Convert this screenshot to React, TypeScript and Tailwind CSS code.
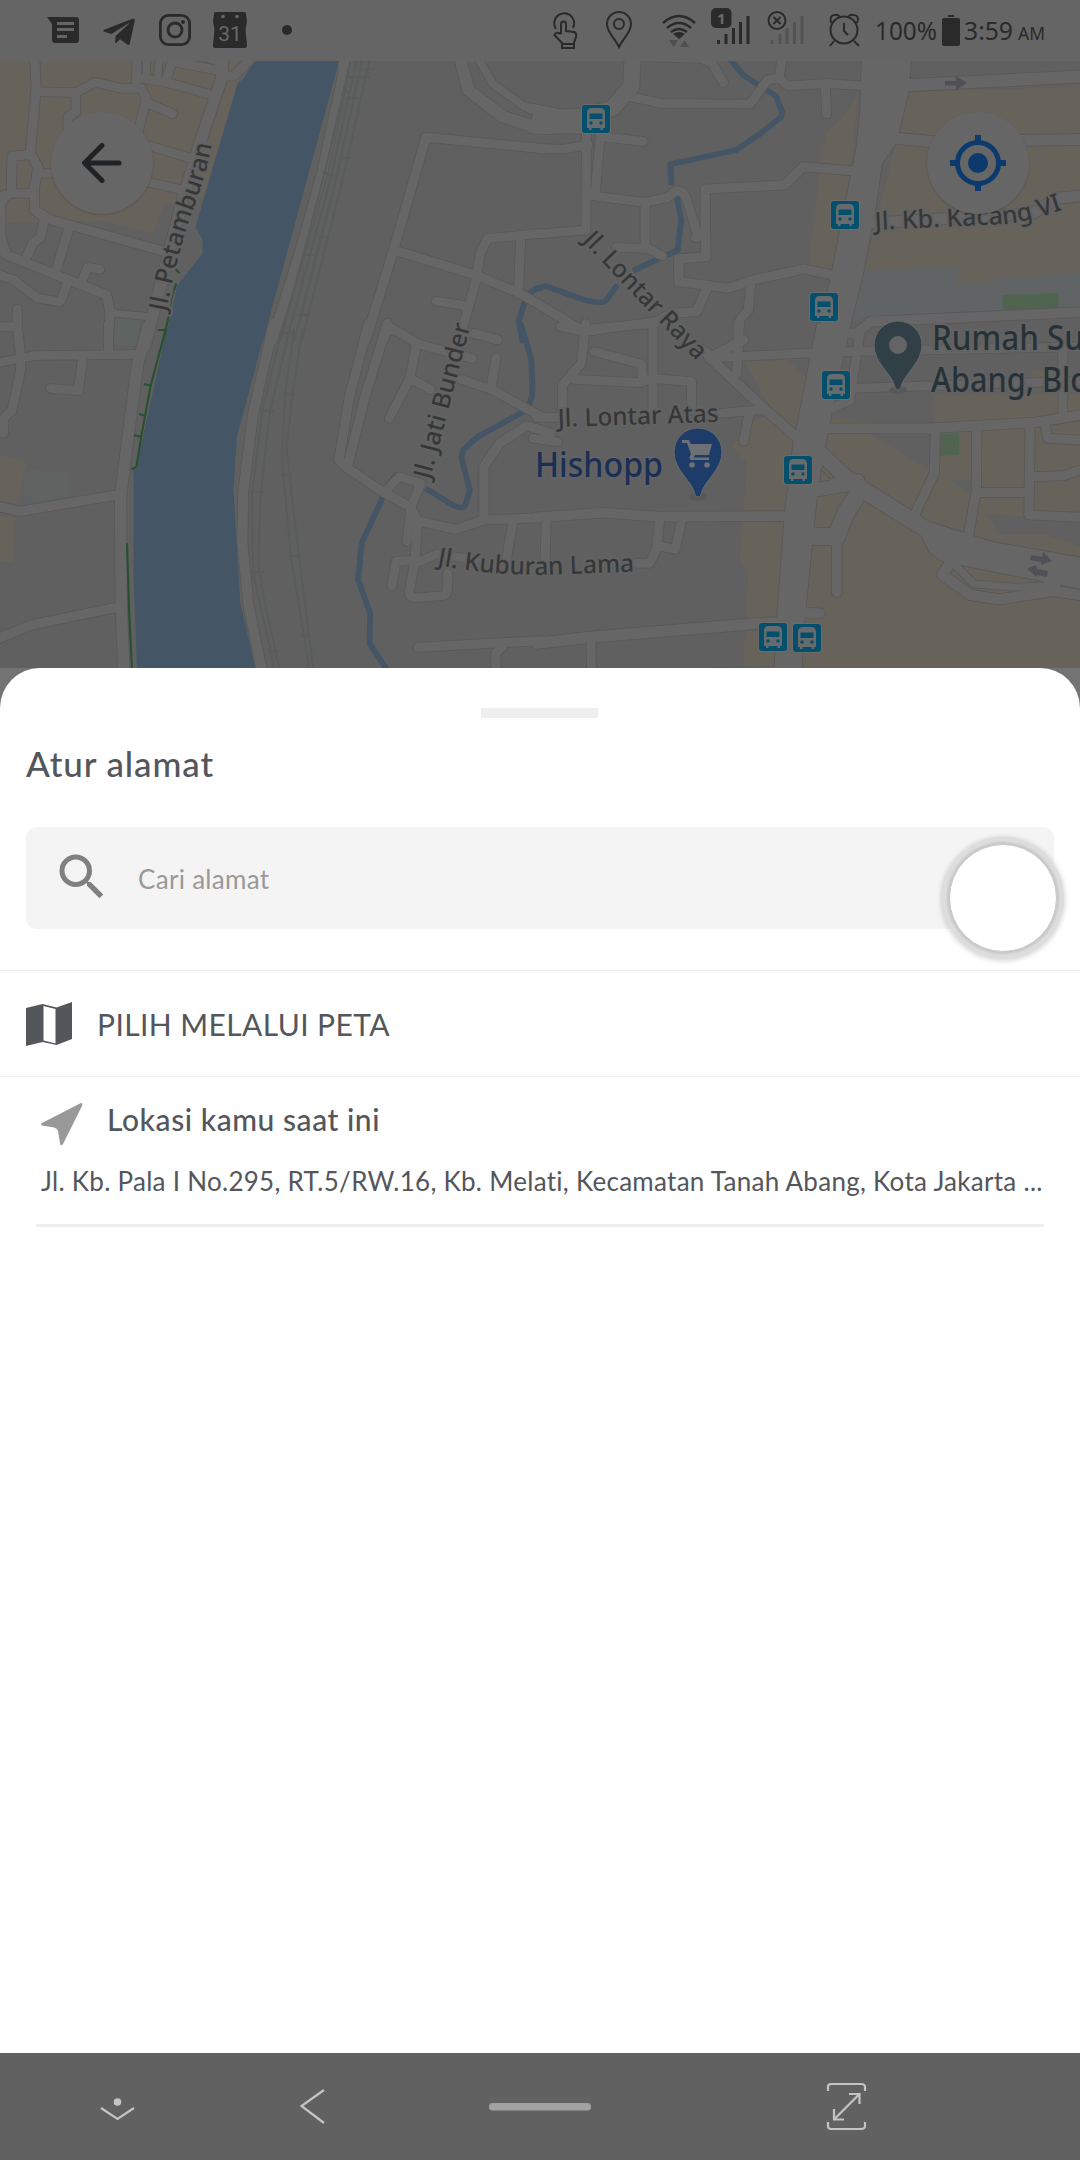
import React from "react";
import { MdSearch } from "react-icons/md";
import { FaTelegramPlane } from "react-icons/fa";

type Road = [sheet: number, width: number, path: string];

// The map is drawn as four sheets that share one coordinate scale.
const SHEETS = [
  "scale(.34439 .33333)",
  "translate(540 0) scale(.34439 .33333)",
  "translate(0 330) scale(.34439 .33333)",
  "translate(540 330) scale(.34439 .33333)",
];

const ROADS: Road[] = [
  [0, 28, "M100 150L105 265L88 460L112 505L100 560V630L130 655"],
  [0, 28, "M88 464L35 468L33 580L0 590M33 580H100M33 580Q4 590 2 620V700Q4 730 20 760"],
  [0, 26, "M105 520H150"],
  [0, 27, "M105 275L220 278L275 247L350 265H410L422 290L425 308L502 341M220 278V336L197 352V390"],
  [0, 27, "M399 150L395 250M395 232L440 240L480 246L610 283M480 246L500 185L640 212M424 300L400 400"],
  [0, 22, "M428 150L423 235M465 150L457 235M500 185L510 150"],
  [0, 28, "M575 160L650 190M640 228L678 228L730 175"],
  [0, 34, "M645 150V230L580 430L530 600L490 760L420 1040"],
  [0, 27, "M430 436L565 478M425 545L530 570"],
  [0, 28, "M100 630L150 660L490 758M127 665L118 712L95 730L80 765M200 685L165 805"],
  [0, 28, "M0 745L20 765L200 840L310 885L320 940L314 1020"],
  [0, 27, "M200 840L175 905L110 895L40 840L0 825M235 850L255 802L290 808M50 927V980H0M50 980L55 1020"],
  [0, 22, "M320 938L430 950"],
  [0, 30, "M1002 150L995 230L935 520L870 760L790 1020"],
  [0, 36, "M1330 150L1360 270L1460 350L1568 385L1600 385"],
  [0, 24, "M1375 150L1430 250L1520 318L1568 330"],
  [0, 28, "M1600 447L1568 445L1237 412L1140 760L1062 1020"],
  [0, 28, "M1150 752L1380 825L1510 880L1568 915"],
  [0, 27, "M1382 840L1395 760L1415 716L1568 700M1512 715L1505 880M1382 840L1345 980M1267 903L1355 918"],
  [0, 26, "M1115 1020Q1120 985 1150 992L1215 1030M1370 1000L1445 1018"],
  [2, 34, "M430 -10L400 100L368 350L350 500L352 830L360 1030"],
  [2, 27, "M0 97L100 77L240 75L410 73M50 -10L60 77V120L35 240L10 265V310M315 -20V70M240 80L228 182L147 175"],
  [2, 29, "M-10 528L58 544L350 493M-10 928L90 885L350 830"],
  [2, 30, "M795 -20L735 250L706 490L704 640L722 830L762 1030"],
  [2, 28, "M1070 -20L1015 200L984 390L1010 415L1110 485L1190 530L1212 570M1125 -20L1060 200L1010 405"],
  [2, 27, "M1130 -10L1210 40L1372 86M1380 10L1445 30M1210 40L1190 145L1130 265M1190 145L1250 178M1340 148L1430 180L1568 258M1440 84L1425 180"],
  [2, 28, "M1600 310L1530 287L1450 340L1405 410V560"],
  [2, 26, "M1190 540L1222 460L1160 440L1118 485M1192 540L1182 635"],
  [2, 28, "M1200 570L1325 598L1405 570L1570 563"],
  [2, 27, "M1212 580L1205 690L1188 790Q1190 804 1210 804L1285 797Q1300 795 1300 770V730M1205 690L1150 694L1138 767M1205 700L1270 672L1380 690M1490 570L1470 690"],
  [2, 28, "M1215 952L1570 932M1440 1030V970L1460 948"],
  [1, 48, "M270 150L265 260L210 325L110 355H0"],
  [1, 30, "M-30 325L60 342L130 340"],
  [1, 46, "M-20 378H130"],
  [1, 27, "M262 290L350 310L610 312L660 240L695 235L705 150M695 235L720 258L830 250L940 258M828 250L832 342"],
  [1, 27, "M270 170L470 175L500 190L533 248"],
  [1, 27, "M135 390L133 690L0 702M176 395L160 580M176 410L300 424M0 447L70 447L140 435"],
  [1, 27, "M133 585L305 607L370 593L395 572Q415 570 425 595L458 705M305 607V740L355 768M222 742L305 745"],
  [1, 28, "M920 514L765 500L710 555L480 567V700L482 770L403 776V845L480 855L545 865L620 840L765 807L860 827"],
  [1, 28, "M482 700L452 712M485 865L455 935L380 940L330 970L120 990L0 915"],
  [1, 27, "M612 850L605 930L580 960L572 1120"],
  [1, 37, "M1060 256L1600 228"],
  [1, 34, "M1020 413L1140 425L1600 418"],
  [1, 34, "M950 670L1430 640L1500 595L1600 585"],
  [1, 30, "M890 1000H920L960 965L1600 935"],
  [3, 27, "M132 -20L120 100L65 165V260M328 -20V240M60 -10L130 5L330 -25"],
  [3, 27, "M158 65L295 102L297 145M100 148L290 158L325 145L440 155V240"],
  [3, 27, "M-20 325L50 335M-10 262H60"],
  [3, 30, "M490 80L650 235L760 335M470 60L500 80L590 30"],
  [3, 27, "M510 83L800 68M575 -20V40M525 250L655 238M608 245L591 335"],
  [3, 30, "M-10 562L185 548L340 560L720 558"],
  [3, 27, "M18 565L15 690M348 565L338 660L318 700H280M412 565L393 658L345 648"],
  [3, 34, "M-10 940L160 920L640 880L700 878"],
  [3, 27, "M148 930L150 1040M500 1027L700 1024"],
  [3, 27, "M880 65L1600 50M900 175L1600 152M930 0L900 210L850 235M1518 60V250"],
  [3, 30, "M820 295H1130L1440 277L1600 250"],
  [3, 28, "M1148 300L1145 430L1085 560M1268 300L1267 480L1243 625M1268 487L1420 488M1423 290L1420 555L1600 563M1435 440L1520 437L1568 420H1600M1465 275L1475 325L1600 332"],
  [3, 30, "M862 630V787M765 848L813 850"],
  [3, 52, "M918 500L890 545L860 620L790 619"],
  [3, 48, "M780 480L920 455"],
  [3, 32, "M1200 685L1168 735L1250 795L1335 808L1490 783L1600 800"],
  [3, 22, "M1200 700L1260 762L1380 772L1500 765"],
];

// Wide avenues whose width changes along their course.
const AVENUES: [number, string][] = [
  [1, "M935 150L930 330L918 450L900 540L845 830L800 1040H888L905 960L940 812L975 620L993 490L1035 430L1070 275L1080 150Z"],
  [3, "M805 -20L735 345L710 560L688 870L680 1040H758L770 850L795 590L805 495L835 310L900 -20Z"],
  [3, "M815 340L910 432L1130 575L1310 635L1600 688V782L1220 705L1165 692L1130 665L1108 618L955 520L905 490L785 370Z"],
];

const STREAMS: [number, string][] = [
  [0, "M1575 863Q1540 868 1527 895L1506 965L1518 1030"],
  [2, "M1512 -20L1543 90L1546 180Q1546 220 1520 245L1385 322L1345 360L1340 385L1364 480L1352 525Q1345 538 1320 528L1235 475"],
  [2, "M1155 430L1115 480L1108 510L1050 640L1040 750L1075 850L1073 940L1130 1030"],
  [1, "M545 170L590 225L650 265L685 288L703 335L700 352L640 400L570 450L378 493L382 555"],
  [1, "M397 590L410 660L400 750L270 812M225 855L190 903Q175 912 130 900L15 858L-20 868"],
];

const BUILT: [number, string][] = [
  [0, "M0 150H740L690 250L590 590L475 615L445 702L300 662L0 668Z"],
  [1, "M1070 275L1600 260V830H1320L1315 850H1210V797L940 812Z"],
  [1, "M925 275L905 490L850 810L780 795L810 520L830 400L880 350Z"],
  [2, "M0 373L78 398L50 520L0 515ZM0 560H46L38 697L0 692Z"],
  [3, "M595 95L720 90L780 150L745 345L690 870L685 1040H588L605 722L580 690L600 400L558 350L620 270L680 255Z"],
  [3, "M835 260L930 275L1145 280V195L1600 190V1040H750L800 440Z"],
  [3, "M1430 120H1490V145H1430Z"],
];

const BUSES = [
  [596, 119], [845, 215], [824, 307], [836, 385], [798, 470], [773, 637], [807, 638],
];

function Bus({ x, y }: { x: number; y: number }) {
  return (
    <g transform={`translate(${x - 14} ${y - 14})`}>
      <rect x="-1" y="-1" width="30" height="30" rx="4" fill="#6b6b6b" />
      <rect width="28" height="28" rx="3" fill="#04506c" />
      <path d="M5 8Q5 3 10 3H18Q23 3 23 8V23H21V25H18.500V23H9.500V25H7V23H5Z" fill="#676b6d" />
      <path d="M7.500 8.500H20.500V14H7.500Z" fill="#04506c" />
      <circle cx="9" cy="18" r="1.700" fill="#04506c" />
      <circle cx="19" cy="18" r="1.700" fill="#04506c" />
    </g>
  );
}

function Pin({ x, y, color }: { x: number; y: number; color: string }) {
  return (
    <g transform={`translate(${x} ${y})`}>
      <ellipse cy="45" rx="9" ry="4" fill="#585858" />
      <path
        d="M0 45Q-3 45-3.500 41C-6 29-24 18-24 0A24 24 0 0 1 24 0C24 18 6 29 3.500 41Q3 45 0 45Z"
        fill={color}
        stroke="#6a6a6a"
        strokeWidth="1"
      />
    </g>
  );
}

function CityMap() {
  return (
    <svg className="absolute inset-0" width="1080" height="607" viewBox="0 61 1080 607">
      <rect y="60" width="1080" height="608" fill="#606060" />
      {BUILT.map(([s, d], i) => (
        <path key={i} d={d} transform={SHEETS[s]} fill="#67635a" />
      ))}
      <g transform={SHEETS[1]}>
        <path d="M940 812L1210 797V850H1315L1320 830L1600 820V925L960 950L905 965Z" fill="#606464" />
        <path d="M1342 885L1505 880V925L1345 932Z" fill="#506450" />
      </g>
      <g transform={SHEETS[3]}>
        <path d="M955 312H1133V420ZM1290 552L1600 570V660L1470 615H1325Q1325 580 1290 552ZM840 195H1145V280L930 275L835 260Z" fill="#606060" />
        <path d="M1185 448L1250 450V490Z" fill="#5f6161" />
        <path d="M1163 312L1217 310V375L1163 377Z" fill="#506450" />
      </g>
      <path d="M28 469L69 473V496L28 503ZM116 312L140 320L136 346H113Z" fill="#5f6463" />
      <g fill="#445665">
        <path transform={SHEETS[0]} d="M760 150L708 235L690 250L568 680L588 720V762L515 855L478 1022H764L985 183V150Z" />
        <path transform={SHEETS[2]} d="M484 -5H773L688 320L678 480L698 820L745 1030H398L388 740V420L398 400Z" />
      </g>
      <g fill="none" strokeLinejoin="round" strokeLinecap="round">
        {STREAMS.map(([s, d], i) => (
          <path key={i} d={d} transform={SHEETS[s]} stroke="#445665" strokeWidth="17" strokeLinecap="butt" />
        ))}
        {ROADS.map(([s, w, d], i) => (
          <path key={i} d={d} transform={SHEETS[s]} stroke="#585858" strokeWidth={w + 4} />
        ))}
        {AVENUES.map(([s, d], i) => (
          <path key={i} d={d} transform={SHEETS[s]} stroke="#585858" strokeWidth="5" />
        ))}
        {ROADS.map(([s, w, d], i) => (
          <path key={i} d={d} transform={SHEETS[s]} stroke="#666" strokeWidth={w - 1} />
        ))}
        {AVENUES.map(([s, d], i) => (
          <path key={i} d={d} transform={SHEETS[s]} fill="#666" />
        ))}
      </g>
      <path d="M820 482L821 469L831 480Z" fill="#67635a" stroke="#585858" />

      {/* railway */}
      <g fill="none" stroke="#595c5c" strokeWidth="6">
        <g transform={SHEETS[0]}>
          <path d="M1025 150L945 510L815 1022M1042 150L962 530L832 1022M1058 150L975 540L855 1022M1080 150L990 560L876 1022" />
          <path d="M1055 208H1085M1005 232H1075M995 275H1015M1005 295H1040M985 475H1018M935 515L972 530M925 710H958M880 765H912M865 945H898M815 998H850" />
        </g>
        <g transform={SHEETS[2]}>
          <path d="M820 -5L762 240L732 490L735 727L750 800L800 1030M842 -5L785 240L757 490L750 700L765 800L815 1030M855 -5L828 190L820 350L822 430L845 680L900 1030M878 -5L850 190L832 350L840 430L868 680L912 1030" />
          <path d="M820 8H850M825 193H855M755 243H795M815 435H846M725 485H765M840 677H873M730 727H767M872 917H902M778 964H810" />
        </g>
      </g>
      {/* river embankment */}
      <g fill="none" stroke="#27502f" strokeWidth="6">
        <path transform={SHEETS[0]} d="M510 808L522 820M512 850L505 872M490 948L474 1022M458 990H480" />
        <path transform={SHEETS[0]} d="M505 872L488 948" strokeWidth="3" />
        <path transform={SHEETS[2]} d="M482 -5L438 165L410 320L396 410L382 418M418 162L440 168M404 252L424 258M389 316L410 320M369 640L375 850L384 1030" />
      </g>

      <g fill="#505057">
        <path d="M945 81H956V76L967 83L956 90V85.500H945Z" />
        <path d="M1031 555L1042 557L1043 552L1052 561L1041 565V562L1030 560ZM1048 571L1037 569L1036 565L1027 569L1037 577V575L1047 577Z" />
      </g>
      {BUSES.map(([x, y]) => (
        <Bus key={`${x}-${y}`} x={x} y={y} />
      ))}
      <Pin x={898} y={345} color="#314046" />
      <circle cx="898" cy="345" r="9" fill="#646464" />
      <Pin x={698} y={452} color="#1d3c69" />
      <g transform="translate(698 452)">
        <path d="M-16-12H-9L-7.500-8H14L11 3H-3L-4.500 5.500H11V8H-7Q-10 7-7 2L-11-9H-16Z" fill="#6d7075" />
        <circle cx="-6" cy="13" r="2.800" fill="#6d7075" />
        <circle cx="9" cy="13" r="2.800" fill="#6d7075" />
      </g>

      <defs>
        <path id="petamburan" d="M166 312Q178 250 194 207T214 130" />
        <path id="jati" d="M430 480L451 400L477 300" />
        <path id="raya" d="M582 241L640 302L710 375" />
        <path id="kacang" d="M875 230L1005 224Q1030 222 1070 207" />
        <path id="kuburan" d="M437 565Q490 575 540 575L660 571" />
      </defs>
      <g
        className="[font-family:'Noto_Sans',sans-serif]"
        fill="#363838"
        stroke="#626262"
        strokeWidth="4"
        strokeLinejoin="round"
        paintOrder="stroke"
        fontSize="25"
        fontWeight="500"
      >
        <text><textPath href="#petamburan" textLength="174" lengthAdjust="spacingAndGlyphs">Jl. Petamburan</textPath></text>
        <text><textPath href="#jati" textLength="160" lengthAdjust="spacingAndGlyphs">Jl. Jati Bunder</textPath></text>
        <text><textPath href="#raya" textLength="166" lengthAdjust="spacingAndGlyphs">Jl. Lontar Raya</textPath></text>
        <text><textPath href="#kacang" textLength="190" lengthAdjust="spacingAndGlyphs">Jl. Kb. Kacang VI</textPath></text>
        <text><textPath href="#kuburan" textLength="198" lengthAdjust="spacingAndGlyphs">Jl. Kuburan Lama</textPath></text>
        <text transform="translate(558 427) rotate(-1.800)" textLength="161" lengthAdjust="spacingAndGlyphs">Jl. Lontar Atas</text>
        <g fontSize="34">
          <text x="535" y="477" fill="#1a2f55" textLength="128" lengthAdjust="spacingAndGlyphs">Hishopp</text>
          <g fill="#273238">
            <text x="932" y="350" textLength="152" lengthAdjust="spacingAndGlyphs">Rumah Su</text>
            <text x="931" y="392" textLength="158" lengthAdjust="spacingAndGlyphs">Abang, Blo</text>
          </g>
        </g>
      </g>
    </svg>
  );
}

function StatusBar() {
  return (
    <header className="flex h-[61px] w-full shrink-0 bg-[#656565] text-[#2a2a2a]">
      <div className="flex h-[60px] flex-1 items-center gap-[22px] pl-[47px]">
        <svg width="32" height="26" viewBox="0 0 32 26" fill="currentColor">
          <path fillRule="evenodd" d="M0 0H29Q32 0 32 3V23Q32 26 29 26H8Q5 26 5 23V7ZM10 5V8H27V5ZM10 11V14H27V11ZM10 18V21H20V18Z" />
        </svg>
        <FaTelegramPlane className="mt-1 size-9" />
        <svg width="32" height="32" viewBox="0 0 32 32" fill="none" stroke="currentColor" strokeWidth="2.800">
          <rect x="1.400" y="1.400" width="29.200" height="29.200" rx="8" />
          <circle cx="16" cy="16" r="7" />
          <circle cx="24" cy="8" r="2" fill="currentColor" stroke="none" />
        </svg>
        <svg width="34" height="36" viewBox="0 0 34 36" fill="currentColor">
          <path d="M3 0H31Q33 0 33 2L34 9L32.500 18L34 33Q34 36 32 36H2Q0 36 0 33L1.500 18L0 9L1 2Q1 0 3 0Z" />
          <circle cx="10" cy="4.500" r="1.800" fill="#696969" />
          <circle cx="24" cy="4.500" r="1.800" fill="#696969" />
          <text x="17" y="28.500" textAnchor="middle" fontFamily="Roboto" fontSize="21" fill="#696969">31</text>
        </svg>
        <span className="ml-[13px] size-[10px] rounded-full bg-[#2a2a2a]" />
      </div>
      <svg width="326" height="60" viewBox="550 0 326 60" fill="none" stroke="currentColor" strokeWidth="2">
        <path d="M556 29A10 10 0 1 1 573 28" />
        <path d="M561 34V24Q561 21.500 563.500 21.500T566 24V31L574 32Q577 33 576 37L574 43V48H562V43L554.500 35Q556 31 561 34M562 44H574" />
        <path d="M619 47C615 38 607 33 607 24A12 12 0 0 1 631 24C631 33 623 38 619 47Z" />
        <circle cx="619" cy="24" r="5" />
        <path d="M663 23Q679 9 695 23M667 28Q679 18 691 28M671 32Q679 26 687 32" strokeWidth="2.600" />
        <path d="M673 34Q679 30 685 34L679 39Z" fill="currentColor" stroke="none" />
        <path d="M669 40H678L673.500 47ZM680 47H689L684.500 40Z" fill="#4f4f4f" stroke="none" />
        <rect x="711" y="8" width="20.500" height="20" rx="5" fill="currentColor" stroke="none" />
        <path d="M718.500 44V40M726 44V34M733.500 44V28M740.500 44V22M748 44V16" strokeWidth="3" />
        <path d="M772 44V40M780 44V34M787 44V28M794.500 44V22M802 44V16" strokeWidth="3" stroke="#535353" />
        <circle cx="777" cy="20.500" r="8.500" fill="#656565" />
        <path d="M773.500 17L780.500 24M780.500 17L773.500 24" />
        <circle cx="844" cy="30" r="13.500" />
        <path d="M844 23V31L848 35M834 41L830 46M854 41L859 46M831 23Q829 15 835 15Q838 14 840 17M857 23Q860 15 853 15Q850 14 848 17" />
        <text x="721.300" y="23.500" textAnchor="middle" fontSize="15" fontWeight="700" fontFamily="Noto Sans" fill="#6a6a6a" stroke="none">1</text>
      </svg>
      <svg width="204" height="60" viewBox="876 0 204 60" fill="currentColor" fontFamily="Noto Sans, sans-serif">
        <text x="875" y="40" fontSize="25.500" textLength="62" lengthAdjust="spacingAndGlyphs">100%</text>
        <rect x="942" y="18" width="18" height="28" rx="2" />
        <rect x="948" y="15" width="6" height="2" />
        <text x="964" y="40" fontSize="25.500" textLength="49" lengthAdjust="spacingAndGlyphs">3:59</text>
        <text x="1018" y="40" fontSize="17.500" textLength="27" lengthAdjust="spacingAndGlyphs">AM</text>
      </svg>
    </header>
  );
}

export default function App() {
  return (
    <main className="flex h-[2160px] w-[1080px] flex-col overflow-hidden bg-[#737373] font-[Lato] text-[#53565b]">
      <StatusBar />
      <section className="relative flex h-[607px] shrink-0 items-start justify-between px-[51px] pt-[51px]">
        <CityMap />
        <button className="relative flex size-[102px] items-center justify-center rounded-full bg-[#666] shadow-[0_1px_2px_rgba(0,0,0,0.15)]">
          <svg width="40" height="40" viewBox="0 0 40 40" fill="none" stroke="#202325" strokeWidth="5" strokeLinecap="round" strokeLinejoin="round">
            <path d="M37 20H3M20 2.500L2.500 20L20 37.500" />
          </svg>
        </button>
        <button className="relative flex size-[102px] items-center justify-center rounded-full bg-[#666] text-[#0c3a6c] shadow-[0_1px_2px_rgba(0,0,0,0.15)]">
          <svg width="56" height="56" viewBox="0 0 56 56" fill="none" stroke="currentColor">
            <circle cx="28" cy="28" r="20.500" strokeWidth="5" />
            <circle cx="28" cy="28" r="10" fill="currentColor" stroke="none" />
            <path d="M28 0V8M28 48V56M0 28H8M48 28H56" strokeWidth="6" />
          </svg>
        </button>
      </section>

      <section className="flex flex-1 flex-col rounded-t-[40px] bg-white">
        <div className="ml-[481px] mt-10 h-[10px] w-[117px] bg-[#efefef]" />
        <h1 className="ml-[26px] mt-[23px] h-[44px] w-max text-[35px] font-medium leading-[44px] tracking-[0.9px]">Atur alamat</h1>
        <div className="relative mx-[26px] mt-[42px] flex h-[102px] shrink-0 items-center rounded-[10px] bg-[#f4f4f4] pl-[26px]">
          <MdSearch className="-mt-[2px] size-[60px] text-[#808080]" />
          <span className="ml-[26px] mt-[1px] w-max text-[26px] leading-8 tracking-[0.3px] text-[#999]">Cari alamat</span>
          <span className="absolute right-[-3px] top-[17px] size-[108px] rounded-full border-[1px] border-[#c8c8c8] bg-white shadow-[0_0_2px_2px_#c8c8c8,0_0_0_7px_#dddddd,0_1px_5px_8px_rgba(0,0,0,0.16)]" />
        </div>
        <div className="mt-[41px] flex h-[107px] shrink-0 items-center border-y border-[#ececec] pl-[26px]">
          <svg width="46" height="44" viewBox="0 0 46 44" fill="currentColor">
            <path fillRule="evenodd" d="M0 6L16.500 2L30.500 5.500L46 0V37L30.500 43L16.500 40L0 44ZM17.500 4V38.500L29.500 41.500V7Z" />
          </svg>
          <span className="ml-[25px] w-max text-[30px] leading-9 tracking-[0.4px]">PILIH MELALUI PETA</span>
        </div>
        <div className="mx-[36px] flex h-[150px] flex-col border-b-[3px] border-[#efefef] px-[5px]">
          <div className="flex h-[74px] items-start pt-[25px]">
            <svg className="mt-[1px]" width="42" height="43" viewBox="0 0 42 43" fill="#999">
              <path d="M40 0Q42 0 41 3L22 41Q19 44 19 40L17 28Q16 25 13 24.500L1 22.500Q-1 21.500 1 20Z" />
            </svg>
            <span className="-mt-[1px] ml-[24px] w-max text-[30px] font-medium leading-9 tracking-[0.55px]">Lokasi kamu saat ini</span>
          </div>
          <p className="mt-[14px] w-max whitespace-nowrap text-[26px] leading-8 tracking-[0.28px]">
            Jl. Kb. Pala I No.295, RT.5/RW.16, Kb. Melati, Kecamatan Tanah Abang, Kota Jakarta ...
          </p>
        </div>
      </section>

      <nav className="h-[107px] shrink-0 bg-[#616161]">
        <svg width="1080" height="107" viewBox="0 2053 1080 107" fill="none" stroke="#c4c4c4" strokeWidth="2.200">
          <circle cx="117.500" cy="2102" r="3.800" fill="#c4c4c4" stroke="none" />
          <path d="M101 2108L117.500 2119L134 2108M324 2090L301.500 2106L324 2123" />
          <rect x="489" y="2103" width="102" height="7.500" rx="3.500" fill="#a2a2a2" stroke="none" />
          <path d="M828 2091V2087Q828 2084 831 2084H861Q865 2084 865 2087V2091M828 2122V2126Q828 2129 831 2129H861Q865 2129 865 2126V2122M834 2119.500L859.500 2094M849 2094H859.500V2104M834 2109V2119.500H844" />
        </svg>
      </nav>
    </main>
  );
}
